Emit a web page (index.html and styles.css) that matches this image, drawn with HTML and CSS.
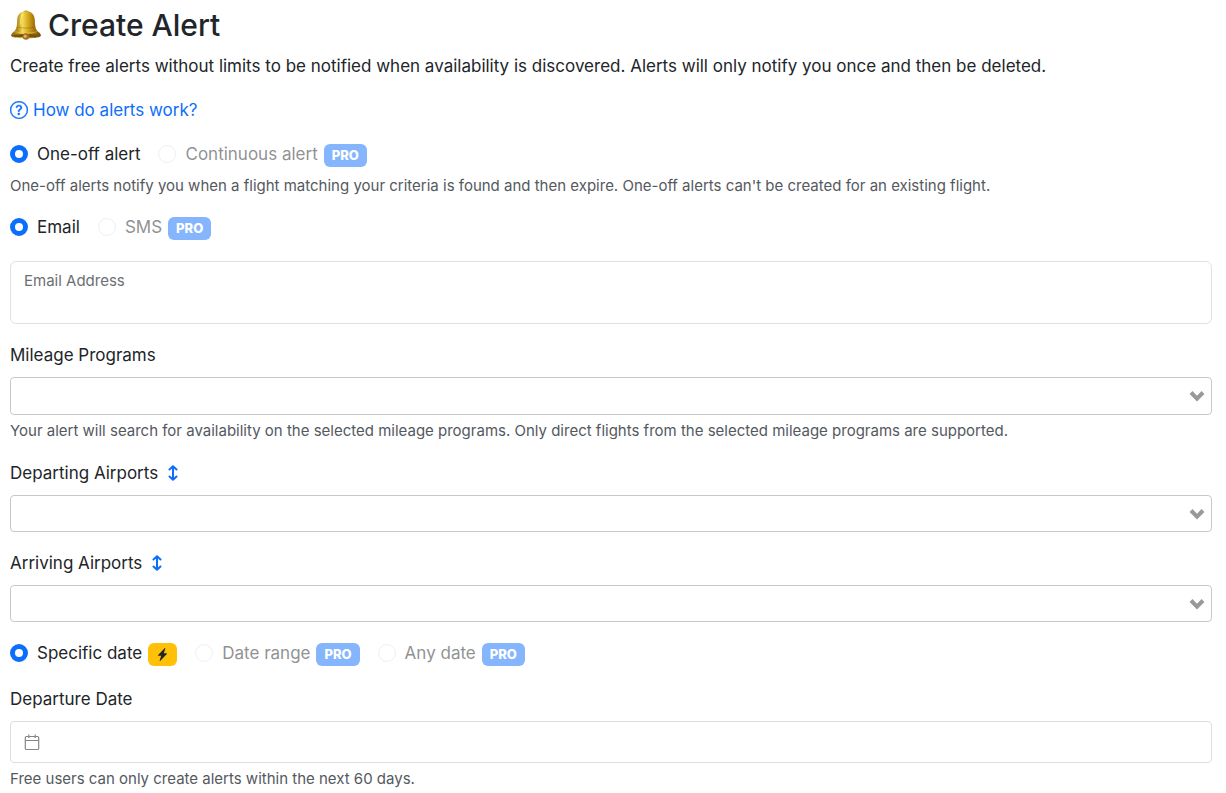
FILE: index.html
```
<!DOCTYPE html>
<html lang="en">

<head>
    <meta charset="UTF-8">
    <meta name="viewport" content="width=device-width, initial-scale=1.0">
    <title>Create Alert</title>
    <link rel="stylesheet" href="styles.css">
</head>

<body>
    <main class="container">
        <h1>
            <svg class="bell" viewBox="0 0 32 32" aria-hidden="true">
                <defs>
                    <linearGradient id="gold" x1="0" x2="1" y1="0" y2="0">
                        <stop offset="0" stop-color="#8a6410" />
                        <stop offset="0.22" stop-color="#b98d1a" />
                        <stop offset="0.38" stop-color="#f3dc58" />
                        <stop offset="0.55" stop-color="#d9ae20" />
                        <stop offset="0.75" stop-color="#a9790f" />
                        <stop offset="1" stop-color="#6b4a0c" />
                    </linearGradient>
                </defs>
                <path d="M13 4C12.600 0.500 19.400 0.500 19 4Z" fill="#b28a1c" />
                <path d="M16 2.200C10.500 2.200 7.500 5.500 7.200 11C7 17 6.600 20.500 3.500 23C1.500 24.500 0.800 26 1.200 27C3 29 10 29.300 16 29.300C22 29.300 29 29 30.800 27C31.200 26 30.500 24.500 28.500 23C25.400 20.500 25 17 24.800 11C24.500 5.500 21.500 2.200 16 2.200Z" fill="url(#gold)" />
                <path d="M2 26.500C8 24.500 24 24.500 30 26.500C28 29 4 29 2 26.500Z" fill="#76520d" />
                <path d="M4.500 22.600C11 24.600 21 24.600 27.500 22.600" fill="none" stroke="#f0cf48" stroke-width="0.800" opacity="0.700" />
                <path d="M7 18C12 19.500 20 19.500 25 18" fill="none" stroke="#80590e" stroke-width="0.600" opacity="0.700" />
                <circle cx="16" cy="27.500" r="3.300" fill="#a66f20" />
                <circle cx="15.200" cy="27.200" r="1.500" fill="#e3b469" />
                <path d="M12.500 5.500C10.800 7.500 10.500 11 10.800 15" fill="none" stroke="#fff6a0" stroke-width="1.200" stroke-linecap="round" opacity="0.600" />
            </svg>
            Create Alert
        </h1>
        <p class="intro">Create free alerts without limits to be notified when availability is discovered. Alerts will only notify you once and then be deleted.</p>
        <a href="#" class="help-link">
            <svg viewBox="0 0 16 16" aria-hidden="true">
                <path d="M8 15A7 7 0 1 1 8 1a7 7 0 0 1 0 14m0 1A8 8 0 1 0 8 0a8 8 0 0 0 0 16" stroke="currentColor" stroke-width="0.300" />
                <path d="M5.255 5.786a.237.237 0 0 0 .241.247h.825c.138 0 .248-.113.266-.25.09-.656.54-1.134 1.342-1.134.686 0 1.314.343 1.314 1.168 0 .635-.374.927-.965 1.371-.673.489-1.206 1.06-1.168 1.987l.003.217a.25.25 0 0 0 .25.246h.811a.25.25 0 0 0 .25-.25v-.105c0-.718.273-.927 1.01-1.486.609-.463 1.244-.977 1.244-2.056 0-1.511-1.276-2.241-2.673-2.241-1.267 0-2.655.59-2.75 2.286m1.557 5.763c0 .533.425.927 1.01.927.609 0 1.028-.394 1.028-.927 0-.552-.42-.94-1.029-.94-.584 0-1.009.388-1.009.94" stroke="currentColor" stroke-width="0.300" />
            </svg>
            How do alerts work?
        </a>

        <form id="alertForm">
            <div class="options">
                <div class="option">
                    <input type="radio" id="oneOff" name="alertType" checked>
                    <label for="oneOff">One-off alert</label>
                </div>
                <div class="option disabled">
                    <input type="radio" id="continuous" name="alertType" disabled>
                    <label for="continuous">Continuous alert <span class="badge">PRO</span></label>
                </div>
            </div>
            <p class="form-text type-text">One-off alerts notify you when a flight matching your criteria is found and then expire. One-off alerts can't be created for an existing flight.</p>

            <div class="options">
                <div class="option">
                    <input type="radio" id="byEmail" name="method" checked>
                    <label for="byEmail">Email</label>
                </div>
                <div class="option disabled">
                    <input type="radio" id="bySms" name="method" disabled>
                    <label for="bySms">SMS <span class="badge">PRO</span></label>
                </div>
            </div>

            <div class="floating">
                <input type="email" id="email">
                <label for="email">Email Address</label>
            </div>

            <div class="field">
                <div class="field-head">
                    <label for="programs">Mileage Programs</label>
                </div>
                <select id="programs" class="programs"></select>
                <p class="form-text">Your alert will search for availability on the selected mileage programs. Only direct flights from the selected mileage programs are supported.</p>
            </div>

            <div class="field">
                <div class="field-head">
                    <label for="departing">Departing Airports</label>
                    <button type="button" class="swap" aria-label="Swap airports">
                        <svg viewBox="0 0 10 16" aria-hidden="true"><path d="M5 1.500V14.500M1.500 4.500L5 1.200L8.500 4.500M1.500 11.500L5 14.800L8.500 11.500" /></svg>
                    </button>
                </div>
                <select id="departing"></select>
            </div>

            <div class="field">
                <div class="field-head">
                    <label for="arriving">Arriving Airports</label>
                    <button type="button" class="swap" aria-label="Swap airports">
                        <svg viewBox="0 0 10 16" aria-hidden="true"><path d="M5 1.500V14.500M1.500 4.500L5 1.200L8.500 4.500M1.500 11.500L5 14.800L8.500 11.500" /></svg>
                    </button>
                </div>
                <select id="arriving"></select>
            </div>

            <div class="options">
                <div class="option">
                    <input type="radio" id="specific" name="dateType" checked>
                    <label for="specific">Specific date
                        <span class="badge instant">
                            <svg viewBox="0 0 16 16" aria-hidden="true"><path d="M11.251.068a.5.5 0 0 1 .227.58L9.677 6.500H13a.5.5 0 0 1 .364.843l-8 8.500a.5.5 0 0 1-.842-.490L6.323 9.500H3a.5.5 0 0 1-.364-.843l8-8.500a.5.5 0 0 1 .615-.09z" /></svg>
                        </span>
                    </label>
                </div>
                <div class="option disabled">
                    <input type="radio" id="range" name="dateType" disabled>
                    <label for="range">Date range <span class="badge">PRO</span></label>
                </div>
                <div class="option disabled">
                    <input type="radio" id="anyDate" name="dateType" disabled>
                    <label for="anyDate">Any date <span class="badge">PRO</span></label>
                </div>
            </div>

            <div class="field">
                <div class="field-head">
                    <label for="date">Departure Date</label>
                </div>
                <div class="date-box">
                    <svg viewBox="0 0 16 16" aria-hidden="true"><path d="M2.500 2.500H13.500Q14.700 2.500 14.700 3.700V14.300Q14.700 15.500 13.500 15.500H2.500Q1.300 15.500 1.300 14.300V3.700Q1.300 2.500 2.500 2.500ZM1.300 6.500H14.700M4.800 0.500V4M11.200 0.500V4" /></svg>
                    <input type="text" id="date">
                </div>
                <p class="form-text">Free users can only create alerts within the next 60 days.</p>
            </div>
        </form>
    </main>
</body>

</html>
```
FILE: styles.css
```
* {
    box-sizing: border-box;
}

body {
    margin: 0;
    background-color: #fff;
    color: #212529;
    font-family: Inter, sans-serif;
    font-size: 17px;
    line-height: 26px;
}

.container {
    padding: 6px 14px 0 10px;
}

h1 {
    display: flex;
    align-items: center;
    gap: 6px;
    margin: 0 0 9px;
    font-size: 30px;
    font-weight: 500;
    line-height: 38px;
}

.bell {
    width: 32px;
    height: 32px;
}

.intro {
    margin: 0 0 18px;
}

/* Help link */
.help-link {
    display: flex;
    align-items: center;
    gap: 5px;
    width: fit-content;
    margin-bottom: 18px;
    color: #0d6efd;
    text-decoration: none;
}

.help-link svg {
    width: 18px;
    height: 18px;
    fill: currentColor;
}

/* Radio rows */
.options {
    display: flex;
    flex-wrap: wrap;
    gap: 18px;
    margin-bottom: 20px;
}

.option {
    display: flex;
    align-items: center;
    gap: 9px;
}

.option label {
    display: flex;
    align-items: center;
    gap: 6px;
}

.option input {
    appearance: none;
    width: 18px;
    height: 18px;
    margin: 0;
    border: 1px solid #dee2e6;
    border-radius: 50%;
    background-color: #fff;
}

.option input:checked {
    border: 5px solid #0d6efd;
}

.disabled {
    opacity: 0.5;
}

.badge {
    margin-top: 3px;
    padding: 0 8px;
    border-radius: 6px;
    background-color: #0d6efd;
    color: #fff;
    font-size: 13px;
    font-weight: 800;
    line-height: 23px;
}

.instant {
    display: flex;
    align-items: center;
    height: 23px;
    background-color: #ffc107;
    color: #212529;
}

.instant svg {
    width: 13px;
    height: 13px;
    fill: currentColor;
}

/* Small text under the fields */
.form-text {
    margin: 4px 0 0;
    color: #54595e;
    font-size: 15px;
    line-height: 23px;
}

.type-text {
    margin: -13px 0 17px;
}

/* Email box, the label lies over the input */
.floating {
    position: relative;
    margin: 21px 0 18px;
}

.floating input {
    display: block;
    width: 100%;
    height: 63px;
    padding: 26px 13px 8px;
    border: 1px solid #dee2e6;
    border-radius: 6px;
    font: inherit;
}

.floating label {
    position: absolute;
    top: 8px;
    left: 14px;
    color: #6c6f73;
    font-size: 15px;
    line-height: 23px;
}

/* Fields */
.field {
    margin-bottom: 18px;
}

.field-head {
    display: flex;
    align-items: center;
    gap: 10px;
    margin-bottom: 9px;
}

.swap {
    display: flex;
    padding: 0;
    border: none;
    background: none;
    color: #0d6efd;
    cursor: pointer;
}

.swap svg {
    width: 10px;
    height: 16px;
    fill: none;
    stroke: currentColor;
    stroke-width: 2;
    stroke-linecap: round;
    stroke-linejoin: round;
}

select {
    appearance: none;
    display: block;
    width: 100%;
    height: 37px;
    padding: 0 32px 0 10px;
    border: 1px solid #c8c8c8;
    border-radius: 4px;
    background: #fff url("data:image/svg+xml,%3Csvg xmlns='http://www.w3.org/2000/svg' viewBox='0 0 16 12'%3E%3Cpath d='M2 2.500L8 8.700L14 2.500' fill='none' stroke='%23999' stroke-width='4'/%3E%3C/svg%3E") no-repeat right 6px center / 16px 12px;
    font: inherit;
}

.programs {
    height: 38px;
}

.date-box {
    display: flex;
    align-items: center;
    gap: 10px;
    height: 42px;
    padding: 0 13px;
    border: 1px solid #dcdfe1;
    border-radius: 4px;
}

.date-box svg {
    width: 16px;
    height: 16px;
    fill: none;
    stroke: #858585;
    stroke-width: 1.2;
}

.date-box input {
    flex: 1;
    min-width: 0;
    padding: 0;
    border: none;
    outline: none;
    font: inherit;
}
```
